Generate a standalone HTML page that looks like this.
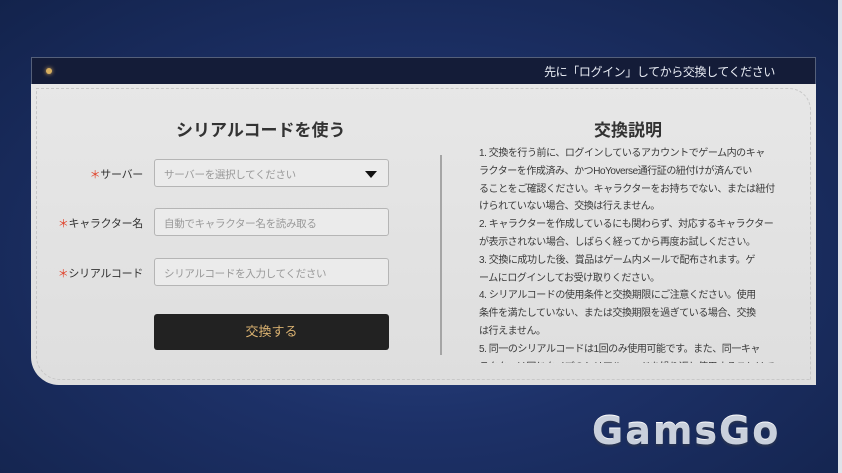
<!DOCTYPE html>
<html><head><meta charset="utf-8"><style>
*{margin:0;padding:0;box-sizing:border-box}
body{width:842px;height:473px;overflow:hidden;position:relative;font-family:"Liberation Sans","Noto Sans CJK JP",sans-serif;
background:radial-gradient(ellipse at 50% 55%,#2a4585 0%,#1d3168 45%,#13234c 100%);}
.strip{position:absolute;right:0;top:0;width:4px;height:473px;background:#dfe3ea}
.hdr{position:absolute;left:31px;top:57px;width:785px;height:27px;background:#141c38;border:1px solid #55607a;border-bottom:none}
.hdr .t{position:absolute;right:40px;top:5px;color:#e8ecf4;font-size:12px;letter-spacing:-0.4px}
.hdr .dot{position:absolute;left:14px;top:10px;width:6px;height:6px;border-radius:50%;background:#d8b060;box-shadow:0 0 4px #e0b060}
.body{position:absolute;left:31px;top:84px;width:785px;height:301px;background:linear-gradient(180deg,#e7e7e7,#dedede);border-bottom-left-radius:28px}
.inner{position:absolute;left:5px;top:4px;right:5px;bottom:5px;border:1px dashed #c8c8c8;border-top-right-radius:22px;border-bottom-left-radius:24px}
h2{position:absolute;font-size:17px;font-weight:bold;color:#333}
.lab{position:absolute;font-size:11px;color:#333;text-align:right;width:90px;letter-spacing:-0.3px}
.lab b{color:#e0442c;font-weight:normal}
.inp{position:absolute;left:154px;width:235px;height:28px;border:1px solid #b5b5b5;border-radius:3px;background:#ebebeb;font-size:10.5px;color:#999;padding:7px 9px;letter-spacing:-0.3px}
.btn{position:absolute;left:154px;top:314px;width:235px;height:36px;background:#222;border-radius:3px;color:#d8b070;font-size:13px;text-align:center;line-height:36px}
.vl{position:absolute;left:440px;top:155px;width:2px;height:200px;background:#a5a5a5}
.txt{position:absolute;left:479px;top:145px;width:300px;height:218px;overflow:hidden;font-size:10px;line-height:17.8px;color:#3a3a3a;letter-spacing:-0.45px;white-space:nowrap}
.logo{position:absolute;left:592px;top:409px;font-size:38px;font-weight:bold;color:#c9d0dc;letter-spacing:2px;text-shadow:0 2px 2px #2a3550,0 -1px 0 #fff;font-family:"DejaVu Sans",sans-serif}
</style></head><body>
<div class="strip"></div>
<div class="hdr"><div class="dot"></div><div class="t">先に「ログイン」してから交換してください</div></div>
<div class="body"><div class="inner"></div></div>
<h2 style="left:176px;top:116px">シリアルコードを使う</h2>
<h2 style="left:594px;top:116px">交換説明</h2>
<div class="lab" style="left:53px;top:166px"><b>＊</b>サーバー</div>
<div class="lab" style="left:53px;top:215px"><b>＊</b>キャラクター名</div>
<div class="lab" style="left:53px;top:265px"><b>＊</b>シリアルコード</div>
<div class="inp" style="top:159px">サーバーを選択してください<span style="position:absolute;right:11px;top:11px;border-left:6px solid transparent;border-right:6px solid transparent;border-top:7px solid #111"></span></div>
<div class="inp" style="top:208px">自動でキャラクター名を読み取る</div>
<div class="inp" style="top:258px">シリアルコードを入力してください</div>
<div class="btn">交換する</div>
<div class="vl"></div>
<div class="txt">1. 交換を行う前に、ログインしているアカウントでゲーム内のキャ<br>ラクターを作成済み、かつHoYoverse通行証の紐付けが済んでい<br>ることをご確認ください。キャラクターをお持ちでない、または紐付<br>けられていない場合、交換は行えません。<br>2. キャラクターを作成しているにも関わらず、対応するキャラクター<br>が表示されない場合、しばらく経ってから再度お試しください。<br>3. 交換に成功した後、賞品はゲーム内メールで配布されます。ゲ<br>ームにログインしてお受け取りください。<br>4. シリアルコードの使用条件と交換期限にご注意ください。使用<br>条件を満たしていない、または交換期限を過ぎている場合、交換<br>は行えません。<br>5. 同一のシリアルコードは1回のみ使用可能です。また、同一キャ<br>ラクターは同じタイプのシリアルコードを繰り返し使用することはで</div>
<div class="logo">GamsGo</div>
</body></html>
